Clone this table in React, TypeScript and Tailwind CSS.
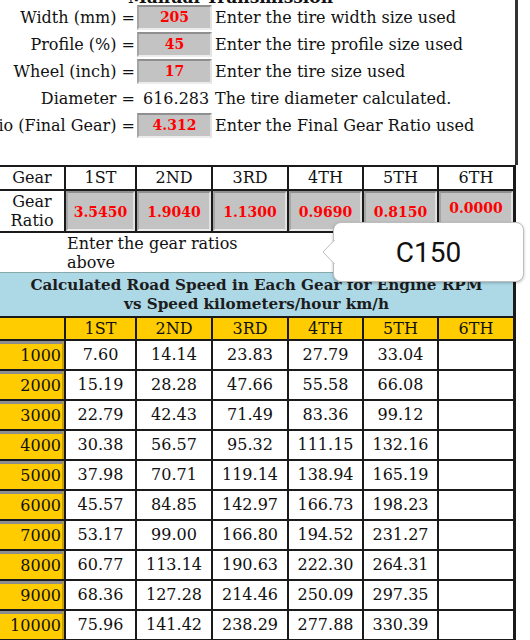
import React from 'react';

const serif = { fontFamily: '"DejaVu Serif", "Liberation Serif", serif' };

const tireRows = [
  { label: 'Width (mm) =', value: '205', note: 'Enter the tire width size used' },
  { label: 'Profile (%) =', value: '45', note: 'Enter the tire profile size used' },
  { label: 'Wheel (inch) =', value: '17', note: 'Enter the tire size used' },
];

const gears = ['1ST', '2ND', '3RD', '4TH', '5TH', '6TH'];
const ratios = ['3.5450', '1.9040', '1.1300', '0.9690', '0.8150', '0.0000'];

const speeds: [string, string[]][] = [
  ['1000', ['7.60', '14.14', '23.83', '27.79', '33.04']],
  ['2000', ['15.19', '28.28', '47.66', '55.58', '66.08']],
  ['3000', ['22.79', '42.43', '71.49', '83.36', '99.12']],
  ['4000', ['30.38', '56.57', '95.32', '111.15', '132.16']],
  ['5000', ['37.98', '70.71', '119.14', '138.94', '165.19']],
  ['6000', ['45.57', '84.85', '142.97', '166.73', '198.23']],
  ['7000', ['53.17', '99.00', '166.80', '194.52', '231.27']],
  ['8000', ['60.77', '113.14', '190.63', '222.30', '264.31']],
  ['9000', ['68.36', '127.28', '214.46', '250.09', '297.35']],
  ['10000', ['75.96', '141.42', '238.29', '277.88', '330.39']],
];

const cols = 'grid grid-cols-[64px_69px_74px_74px_73px_73px_74px] gap-[2px]';

function GrayInput({ value, className = '' }: { value: string; className?: string }) {
  return (
    <div
      className={`flex items-center justify-center bg-[#c3c3c3] border-2 border-t-[#8f8f8f] border-l-[#a5a5a5] border-b-[#ececec] border-r-[#e2e2e2] font-bold text-[#ff0000] text-[14px] ${className}`}
    >
      {value}
    </div>
  );
}

export default function App() {
  return (
    <div className="w-[530px] h-[640px] overflow-hidden bg-white relative text-[#111] text-[16px]" style={serif}>
      {/* tire section */}
      <div className="w-[518px] h-[165px] border-r-[3px] border-[#333]">
        <div className="h-[4px] overflow-hidden">
          <div className="-mt-[12px] pl-[128px] font-bold text-[17px] leading-[19px] whitespace-nowrap">Manual Transmission</div>
        </div>
        {tireRows.map((r) => (
          <div key={r.label} className="flex items-center h-[27px]">
            <div className="w-[135px] flex justify-end whitespace-nowrap">{r.label}</div>
            <GrayInput value={r.value} className="ml-[2px] w-[75px] h-[25px]" />
            <div className="ml-[3px] whitespace-nowrap">{r.note}</div>
          </div>
        ))}
        <div className="flex items-center h-[27px]">
          <div className="w-[135px] flex justify-end whitespace-nowrap">Diameter =</div>
          <div className="ml-[8px] w-[69px] whitespace-nowrap">616.283</div>
          <div className="ml-[3px] whitespace-nowrap">The tire diameter calculated.</div>
        </div>
        <div className="flex items-center h-[27px]">
          <div className="w-[135px] flex justify-end whitespace-nowrap">Ratio (Final Gear) =</div>
          <GrayInput value="4.312" className="ml-[2px] w-[75px] h-[25px]" />
          <div className="ml-[3px] whitespace-nowrap">Enter the Final Gear Ratio used</div>
        </div>
      </div>

      {/* gear ratio table */}
      <div className="w-[516px] border-t-2 border-r-[3px] border-b-2 border-[#1a1a1a]">
        <div className={`${cols} bg-[#1a1a1a]`}>
          <div className="bg-white h-[22px] flex items-center justify-center">Gear</div>
          {gears.map((g) => (
            <div key={g} className="bg-white h-[22px] flex items-center justify-center">{g}</div>
          ))}
          <div className="bg-white h-[40px] flex flex-col items-center justify-center leading-[19px]">
            <span>Gear</span>
            <span>Ratio</span>
          </div>
          {ratios.map((r, i) => (
            <GrayInput key={r + i} value={r} className={`h-[40px] ${i === 5 ? 'pb-[6px]' : 'pt-[2px]'}`} />
          ))}
        </div>
      </div>
      <div className="h-[39px] pl-[67px] pt-[1px] w-[290px] leading-[19px]">Enter the gear ratios above</div>

      {/* speed table */}
      <div className="w-[516px] border-r-[3px] border-b-2 border-[#1a1a1a] bg-[#1a1a1a]">
        <div className="h-[44px] bg-[#add8e6] border-t border-[#8aa] flex flex-col items-center justify-center font-bold text-[15.2px] leading-[19px] text-[#1c1c1c]">
          <span className="whitespace-nowrap">Calculated Road Speed in Each Gear for Engine RPM</span>
          <span className="whitespace-nowrap">vs Speed kilometers/hour km/h</span>
        </div>
        <div className={`${cols} pt-[2px]`}>
          <div className="bg-[#ffcc00] h-[21px]" />
          {gears.map((g) => (
            <div key={g} className="bg-[#ffcc00] h-[21px] flex items-center justify-center">{g}</div>
          ))}
          {speeds.map(([rpm, vals]) => (
            <React.Fragment key={rpm}>
              <div className="bg-[#ffcc00] h-[28px] border-t-[3px] border-[#8d8d8d] border-r-2 border-r-[#c8a000] flex items-center justify-end pr-[1px] pb-[1px]">
                {rpm}
              </div>
              {vals.map((v, i) => (
                <div key={rpm + i} className="bg-white h-[28px] flex items-center justify-center">{v}</div>
              ))}
              <div className="bg-white h-[28px]" />
            </React.Fragment>
          ))}
        </div>
      </div>

      {/* tooltip */}
      <div className="absolute left-[333px] top-[222px] w-[191px] h-[60px] bg-white rounded-[8px] border border-[#bdbdbd] shadow-[0_1px_3px_rgba(0,0,0,0.25)] flex items-center justify-center">
        <svg className="absolute -left-[12px] top-[17px]" width="13" height="24" viewBox="0 0 13 24">
          <path d="M13 0 L1 12 L13 24 Z" fill="white" />
          <path d="M12.5 0 L1 12 L12.5 24" fill="none" stroke="#bdbdbd" strokeWidth="1" />
        </svg>
        <span className="text-[28px] text-[#111] pt-[2px]" style={{ fontFamily: 'Roboto, "Noto Sans", sans-serif' }}>C150</span>
      </div>
    </div>
  );
}
